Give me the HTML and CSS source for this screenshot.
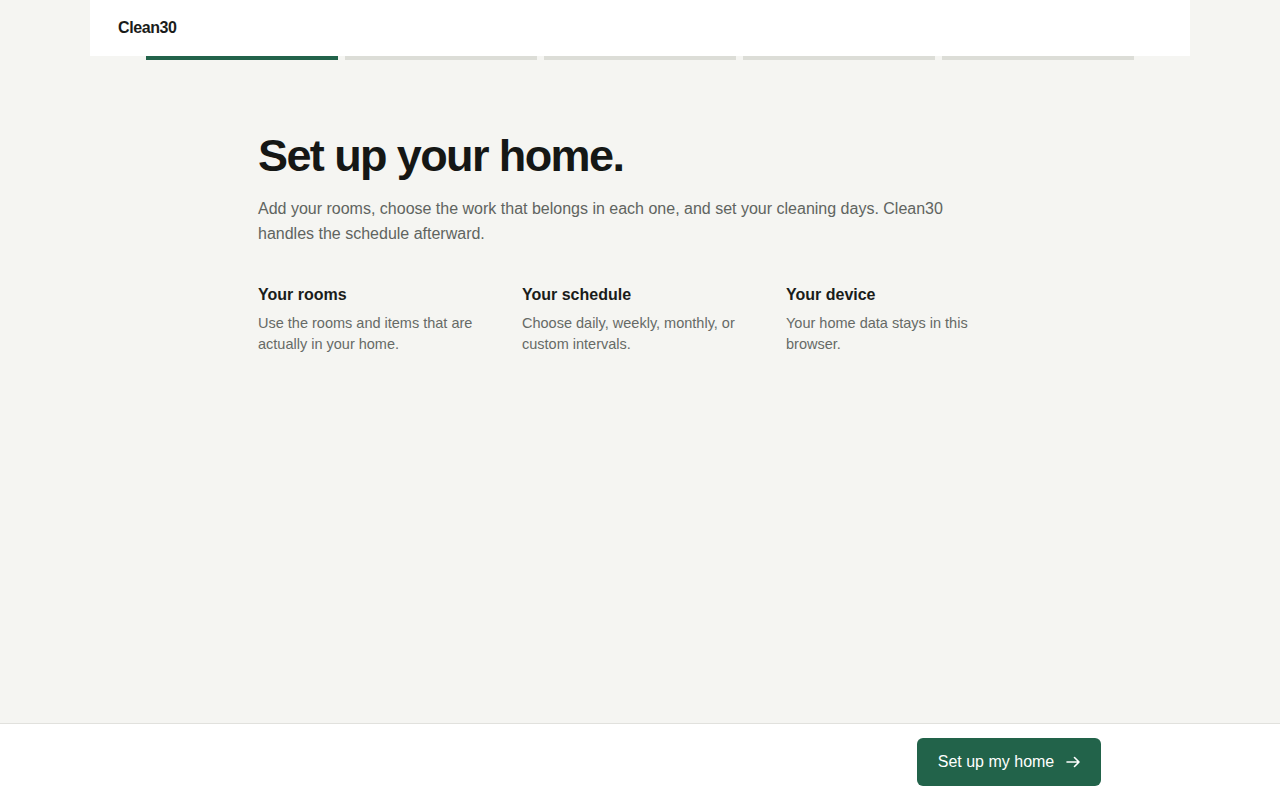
FILE: index.html
```html
<!DOCTYPE html>
<html lang="en">
<head>
    <meta charset="UTF-8">
    <meta name="viewport" content="width=device-width, initial-scale=1.0">
    <title>Clean30 - Set up your home</title>
    <link rel="stylesheet" href="styles.css">
</head>
<body>
    <header class="topbar">
        <div class="brand">Clean30</div>
    </header>
    <div class="steps">
        <span class="step active"></span>
        <span class="step"></span>
        <span class="step"></span>
        <span class="step"></span>
        <span class="step"></span>
    </div>

    <main class="intro">
        <h1 class="title">Set up your home.</h1>
        <p class="lead">Add your rooms, choose the work that belongs in each one, and set your cleaning days. Clean30 handles the schedule afterward.</p>

        <div class="points">
            <div class="point">
                <h3>Your rooms</h3>
                <p>Use the rooms and items that are actually in your home.</p>
            </div>
            <div class="point">
                <h3>Your schedule</h3>
                <p>Choose daily, weekly, monthly, or custom intervals.</p>
            </div>
            <div class="point">
                <h3>Your device</h3>
                <p>Your home data stays in this browser.</p>
            </div>
        </div>
    </main>

    <footer class="actions">
        <button class="primary">
            Set up my home
            <svg class="arrow" width="14" height="12" viewBox="0 0 14 12" fill="none" stroke="currentColor" stroke-width="1.6" stroke-linecap="round" stroke-linejoin="round">
                <path d="M1 6h12M8.5 1.5L13 6l-4.5 4.5"/>
            </svg>
        </button>
    </footer>
</body>
</html>
```

FILE: styles.css
```css
* {
    box-sizing: border-box;
}
body {
    margin: 0;
    min-height: 100vh;
    background-color: #f5f5f2;
    font-family: "Liberation Sans", Arial, sans-serif;
    color: #1a1c1a;
    display: flex;
    flex-direction: column;
}
.topbar {
    width: 1100px;
    height: 56px;
    margin: 0 auto;
    background-color: #ffffff;
    padding: 0 28px;
    display: flex;
    align-items: center;
}
.brand {
    font-size: 16px;
    font-weight: 700;
    letter-spacing: -0.4px;
    color: #1a1c1a;
}
.steps {
    width: 988px;
    margin: 0 auto;
    display: flex;
    gap: 7px;
}
.step {
    flex: 1;
    height: 4px;
    background-color: #dcddd7;
}
.step.active {
    background-color: #22634a;
}

.intro {
    flex: 1;
    width: 764px;
    margin: 0 auto;
    padding-top: 68px;
}
.title {
    margin: 0;
    font-size: 45px;
    line-height: 56px;
    font-weight: 700;
    letter-spacing: -1.6px;
    color: #151715;
}
.lead {
    margin: 12px 0 0;
    max-width: 720px;
    font-size: 16px;
    line-height: 25px;
    color: #606460;
}
.points {
    margin-top: 38px;
    display: grid;
    grid-template-columns: repeat(3, 240px);
    gap: 24px;
}
.point h3 {
    margin: 0;
    font-size: 16px;
    line-height: 22px;
    font-weight: 700;
    color: #1a1c1a;
}
.point p {
    margin: 7px 0 0;
    font-size: 14.5px;
    line-height: 21px;
    color: #666a66;
}

.actions {
    height: 77px;
    background-color: #ffffff;
    border-top: 1px solid #e1e1dd;
    display: flex;
    align-items: center;
    justify-content: flex-end;
    padding: 0 179px 0 0;
}
.primary {
    height: 48px;
    width: 184px;
    border: none;
    border-radius: 6px;
    background-color: #22634a;
    color: #ffffff;
    font-family: inherit;
    font-size: 16px;
    cursor: pointer;
    display: flex;
    align-items: center;
    justify-content: center;
    gap: 12px;
}
.arrow {
    display: block;
}
```
